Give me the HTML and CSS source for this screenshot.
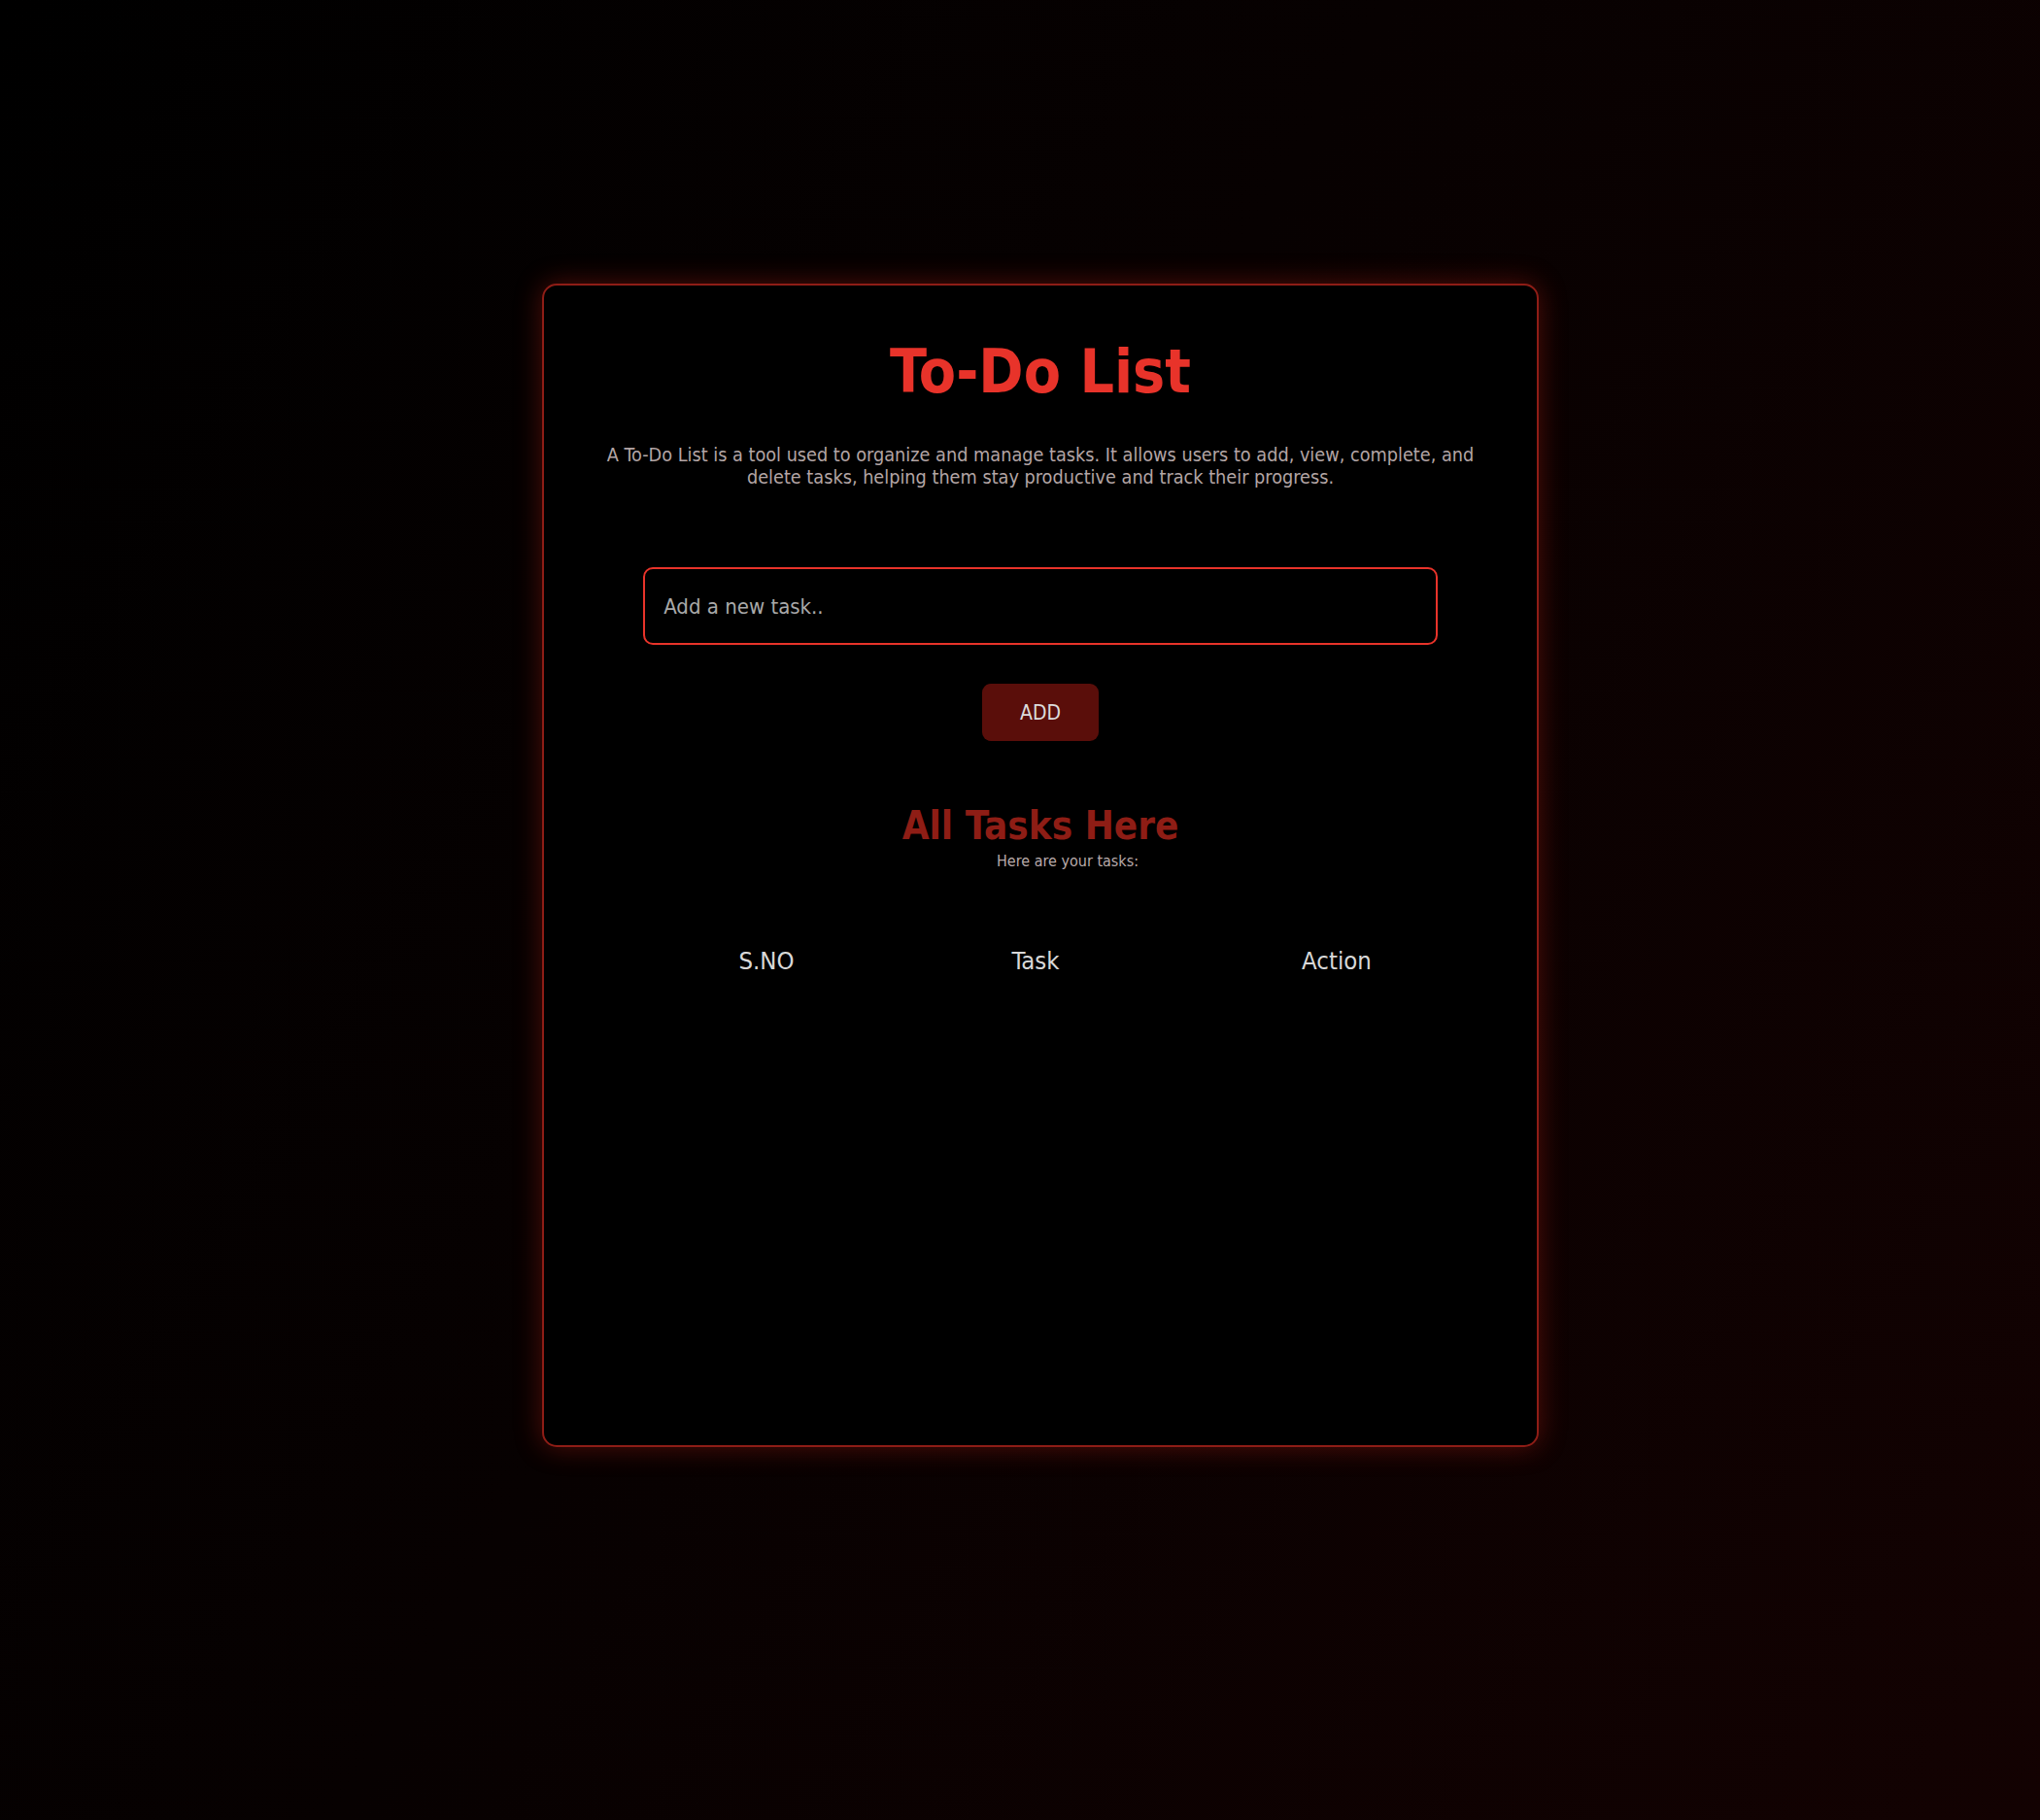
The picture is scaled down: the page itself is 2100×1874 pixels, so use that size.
FILE: index.html
```html
<!DOCTYPE html>
<html lang="en">
<head>
<meta charset="UTF-8">
<title>To-Do List</title>
<link rel="stylesheet" href="styles.css">
</head>
<body>
  <main class="card">
    <h1 class="title">To-Do List</h1>
    <p class="desc">A To-Do List is a tool used to organize and manage tasks. It allows users to add, view, complete, and delete tasks, helping them stay productive and track their progress.</p>
    <input class="task-input" type="text" placeholder="Add a new task..">
    <button class="add-btn" type="button">ADD</button>
    <h2 class="subtitle">All Tasks Here</h2>
    <section class="tasks">
      <p class="hint">Here are your tasks:</p>
      <table class="task-table">
        <colgroup>
          <col class="c1"><col class="c2"><col class="c3">
        </colgroup>
        <thead>
          <tr><th>S.NO</th><th>Task</th><th>Action</th></tr>
        </thead>
        <tbody></tbody>
      </table>
    </section>
  </main>
</body>
</html>
```

FILE: styles.css
```css
* { box-sizing: border-box; }

html, body { height: 100%; }

body {
  margin: 0;
  min-height: 100vh;
  background: linear-gradient(120deg, #000 0%, #070101 45%, #130202 100%);
  font-family: "DejaVu Sans Condensed", "DejaVu Sans", sans-serif;
  font-stretch: condensed;
  display: flex;
  justify-content: center;
  align-items: flex-start;
  padding: 292px 0 0 42px;
}

.card {
  width: 1026px;
  height: 1198px;
  background: #000;
  border: 2px solid #8e1d16;
  border-radius: 15px;
  box-shadow: 0 0 28px rgba(170, 30, 20, 0.45);
  display: flex;
  flex-direction: column;
  align-items: center;
}

.title {
  margin: 54px 0 0;
  font-size: 62px;
  line-height: 70px;
  font-weight: bold;
  color: #e8332a;
}

.desc {
  margin: 39px 0 0;
  padding: 0 40px;
  font-size: 19.7px;
  line-height: 23px;
  color: #b3a5a5;
  text-align: center;
}

.task-input {
  margin-top: 81px;
  width: 80%;
  height: 80px;
  background: #000;
  border: 2px solid #e8332a;
  border-radius: 10px;
  padding: 0 19px;
  font-family: inherit;
  font-stretch: condensed;
  font-size: 22px;
  color: #ddd;
  outline: none;
}

.task-input::placeholder { color: #a9a9a9; }

.add-btn {
  margin-top: 40px;
  width: 120px;
  height: 59px;
  border: none;
  border-radius: 9px;
  background: #5a0e0a;
  color: #dcdcdc;
  font-family: inherit;
  font-stretch: condensed;
  font-size: 21px;
  padding: 0;
}

.subtitle {
  margin: 64px 0 0;
  font-size: 40px;
  line-height: 46px;
  font-weight: bold;
  color: #8e1d15;
}

.tasks {
  width: 100%;
  padding-left: 56px;
  display: flex;
  flex-direction: column;
  align-items: center;
}

.hint {
  margin: 4px 0 0;
  font-size: 16px;
  line-height: 19px;
  color: #b8aaaa;
}

.task-table {
  margin-top: 79px;
  width: 915px;
  table-layout: fixed;
  border-collapse: collapse;
}

.c1 { width: 295px; }
.c2 { width: 259px; }
.c3 { width: 361px; }

.task-table th {
  padding: 0;
  font-size: 25.5px;
  line-height: 28px;
  font-weight: normal;
  color: #d8d8d8;
  text-align: center;
}
```
